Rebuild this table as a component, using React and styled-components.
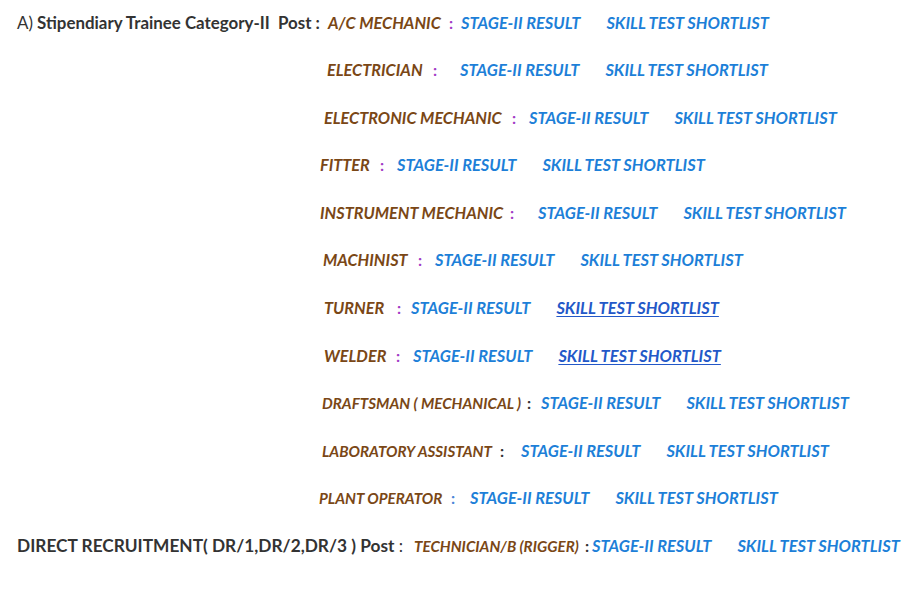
import React from 'react'
import styled, { createGlobalStyle } from 'styled-components'

const GlobalStyle = createGlobalStyle`
  html, body {
    margin: 0;
    padding: 0;
    background: #fff;
  }
  body {
    font-family: Lato, 'Open Sans', sans-serif;
  }
`

const rows = [
  { head: 'A', x: 328, trade: 'A/C MECHANIC', colonAt: 449, stageAt: 461, colon: 'purple' },
  { x: 327, trade: 'ELECTRICIAN', colonAt: 433, stageAt: 460, colon: 'purple' },
  { x: 324, trade: 'ELECTRONIC MECHANIC', colonAt: 512, stageAt: 529, colon: 'purple' },
  { x: 320, trade: 'FITTER', colonAt: 380, stageAt: 397, colon: 'purple' },
  { x: 320, trade: 'INSTRUMENT MECHANIC', colonAt: 510, stageAt: 538, colon: 'purple' },
  { x: 323, trade: 'MACHINIST', colonAt: 418, stageAt: 435, colon: 'purple' },
  { x: 324, trade: 'TURNER', colonAt: 397, stageAt: 411, colon: 'purple', underline: true },
  { x: 324, trade: 'WELDER', colonAt: 396, stageAt: 413, colon: 'purple', underline: true },
  { x: 322, trade: 'DRAFTSMAN ( MECHANICAL )', colonAt: 527, stageAt: 541, colon: 'dark', small: true },
  { x: 322, trade: 'LABORATORY ASSISTANT', colonAt: 500, stageAt: 521, colon: 'dark', small: true },
  { x: 319, trade: 'PLANT OPERATOR', colonAt: 451, stageAt: 470, colon: 'blue', small: true },
  { head: 'DR', x: 414, trade: 'TECHNICIAN/B (RIGGER)', colonAt: 585, stageAt: 592, colon: 'dark', small: true },
]

const colonColors = {
  purple: '#a23cc6',
  dark: '#333333',
  blue: '#4a86d8',
}

const PAGE_LEFT = 17

const Page = styled.main`
  display: flex;
  flex-direction: column;
  gap: 23.6px;
  padding: 10.5px 0 0 ${PAGE_LEFT}px;
`

const Row = styled.div`
  display: flex;
  align-items: baseline;
  height: 24px;
  line-height: 24px;
  white-space: nowrap;
`

const Lead = styled.div`
  flex: none;
  width: ${p => p.$width}px;
  font-size: ${p => (p.$large ? 17.3 : 16.9)}px;
  font-weight: 700;
  color: #333;
`

const Plain = styled.span`
  font-weight: 400;
`

const Trade = styled.span`
  flex: none;
  width: ${p => p.$width}px;
  font-size: ${p => (p.$small ? 15.2 : 16.3)}px;
  font-weight: 700;
  font-style: italic;
  color: #7a4716;
`

const Colon = styled.span`
  flex: none;
  width: ${p => p.$width}px;
  font-size: 16px;
  font-weight: 700;
  color: ${p => colonColors[p.$tone]};
`

const LinkText = styled.a`
  flex: none;
  font-size: 16.45px;
  font-weight: 700;
  font-style: italic;
  color: ${p => (p.$underline ? '#2358c8' : '#1d7fd8')};
  text-decoration: ${p => (p.$underline ? 'underline' : 'none')};
  text-underline-offset: 2px;
  margin-left: ${p => p.$gap || 0}px;
  cursor: pointer;
`

const Header = ({ kind }) =>
  kind === 'A' ? (
    <>
      <Plain>A)</Plain> Stipendiary Trainee Category-II&nbsp; Post :
    </>
  ) : (
    <>
      DIRECT RECRUITMENT( DR/1,DR/2,DR/3 ) Post <Plain>:</Plain>
    </>
  )

const App = () => {
  return (
    <>
      <GlobalStyle />
      <Page>
        {rows.map(r => (
          <Row key={r.trade}>
            <Lead $width={r.x - PAGE_LEFT} $large={r.head === 'DR'}>
              {r.head && <Header kind={r.head} />}
            </Lead>
            <Trade $width={r.colonAt - r.x} $small={r.small}>
              {r.trade}
            </Trade>
            <Colon $width={r.stageAt - r.colonAt} $tone={r.colon}>
              :
            </Colon>
            <LinkText>STAGE-II RESULT</LinkText>
            <LinkText $gap={26} $underline={r.underline}>
              SKILL TEST SHORTLIST
            </LinkText>
          </Row>
        ))}
      </Page>
    </>
  )
}

export default App
